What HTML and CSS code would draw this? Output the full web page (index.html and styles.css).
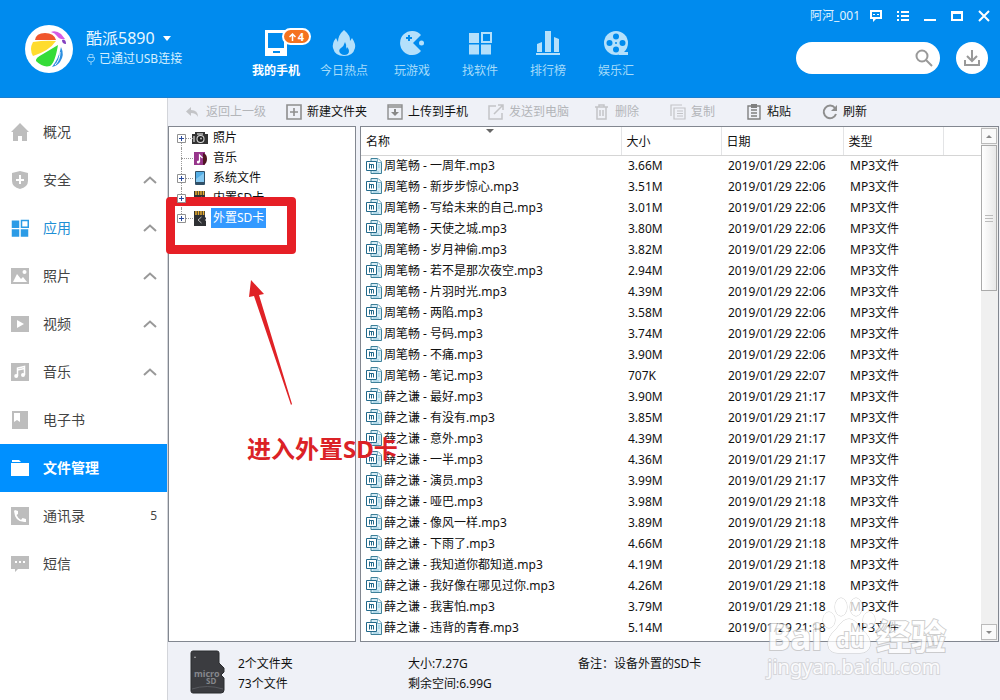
FILE: index.html
```html
<!DOCTYPE html>
<html lang="zh-CN">
<head>
    <meta charset="UTF-8">
    <meta name="viewport" content="width=device-width, initial-scale=1.0">
    <title>手机助手 - 文件管理</title>
    <link rel="stylesheet" href="styles.css">
</head>
<body>
    <!-- Shared icons -->
    <svg class="sprite" aria-hidden="true">
        <symbol id="doc" viewBox="0 0 16 16">
            <path d="M5 .5h7l3.500 3.500v11.500H5z" fill="#d5ecf6" stroke="#3d8099"/>
            <path d="M11.500.5v4h4" fill="#fff" stroke="#7fb3c8"/>
            <path d="M.5 3.500h10v9H.5z" fill="#fff" stroke="#22698a"/>
            <path d="M3.500 10.500v-5M3.500 6.500h4v4M5.500 6.500v4" fill="none" stroke="#22698a"/>
            <path d="M12 7h2M12 9h2M7 14h6" stroke="#8fc6dc"/>
        </symbol>
        <symbol id="up" viewBox="0 0 14 8">
            <path d="M1 7l6-5.500L13 7" fill="none" stroke="#999" stroke-width="2"/>
        </symbol>
        <symbol id="apps" viewBox="0 0 24 24">
            <path d="M1 2h10v10H1zM1 13.500h10v10H1zM13 13.500h10v10H13z"/>
            <path fill-rule="evenodd" d="M13 1h11v11H13zm2 2v7h7V3z"/>
        </symbol>
        <symbol id="plus" viewBox="0 0 9 9">
            <path d="M.5.5h8v8h-8z" fill="#fff" stroke="#919191"/>
            <path d="M2 4.500h5M4.500 2v5" stroke="#2b4a9b"/>
        </symbol>
        <symbol id="sd" viewBox="0 0 16 16">
            <path d="M2 1h11v6l1 1v1l-1 1 1 1v5H2z" fill="#2e3033"/>
            <path d="M4 1v4M6.500 1v4M9 1v4M11.500 1v4" stroke="#e9ad2f" stroke-width="1.500"/>
            <path d="M9.500 7L6 10l3.500 3" fill="none" stroke="#bbb"/>
        </symbol>
    </svg>

    <header class="top">
        <svg class="avatar" viewBox="0 0 48 48">
            <circle cx="24" cy="24" r="24" fill="#fff"/>
            <path d="M10 15Q11 8 20 8q9 0 11 7z" fill="#f0562c"/>
            <path d="M8 17q12-2 23-1Q24 26 8 31q-4-7 0-14z" fill="#ffdc2e"/>
            <path d="M33 20Q30 38 25 41q-7 2-14-5-1-3 7-7z" fill="#35dc38"/>
            <path d="M36 22q4 8-1 15-3 4-8 5 7-9 9-20z" fill="#2d8fe0"/>
            <path d="M35 27q0 8-5 13" fill="none" stroke="#fff"/>
            <path d="M26 7q5-2 10 2l4 5q-5 1-8-3-2-3-6-4z" fill="#d65be5"/>
            <path d="M37 15q4-1 4 4-4 0-4-4z" fill="#8340c0"/>
        </svg>
        <div class="device">
            <button class="device-name">酷派5890
                <svg width="8" height="5" viewBox="0 0 8 5"><path d="M0 0h8L4 5z" fill="#fff"/></svg>
            </button>
            <p class="device-state">
                <svg width="8" height="12" viewBox="0 0 8 12"><path d="M2 4V1.500h4V4M.5 4.500h7V6Q7 9 4 9T.5 6zM4 9v3" fill="none" stroke="#8fd0fa"/></svg>
                已通过USB连接
            </p>
        </div>

        <nav class="main-nav">
            <a href="#phone" class="current">
                <svg viewBox="0 0 24 26"><path fill="#fff" fill-rule="evenodd" d="M1 0h22v26H1zm3 3v15h16V3zm5 18v2h7v-2z"/></svg>
                我的手机
                <span class="badge"><svg width="7" height="8" viewBox="0 0 7 8"><path d="M3.500 8V1M.5 4l3-3 3 3" fill="none" stroke="#fff" stroke-width="1.500"/></svg>4</span>
            </a>
            <a href="#hot">
                <svg viewBox="0 0 24 26"><path fill-rule="evenodd" d="M12 0q7 6 6 11l2-3q4 6 3 10-2 8-11 8T1 18q-1-5 3-10l2 4q0-7 6-12zm1 12q-1 4-4 6t-1 5q2 2 4 2 5 0 5-4 0-2-2-4l-1 2q1-4-1-7z"/></svg>
                今日热点
            </a>
            <a href="#games">
                <svg viewBox="0 0 24 26"><path fill-rule="evenodd" d="M21 5A12 12 0 1 0 21 21l-8-8zM8 5h2v2h2v2h-2v2H8V9H6V7h2z"/><circle cx="21.500" cy="13" r="2.500"/></svg>
                玩游戏
            </a>
            <a href="#soft">
                <svg viewBox="0 0 24 26"><use href="#apps" y="1" width="24" height="24"/></svg>
                找软件
            </a>
            <a href="#rank">
                <svg viewBox="0 0 24 26"><path d="M0 23h24v2H0zM1 14l5-2v10H1zM9 1h6v21H9zM18 7l5 2v13h-5z"/></svg>
                排行榜
            </a>
            <a href="#fun">
                <svg viewBox="0 0 24 26"><circle cx="12" cy="13" r="12"/><path d="M15 22h9v3h-9z"/><g fill="#008bee"><circle cx="12" cy="6.500" r="3"/><circle cx="12" cy="19.500" r="3"/><circle cx="5.500" cy="13" r="3"/><circle cx="18.500" cy="13" r="3"/><circle cx="12" cy="13" r="1"/></g></svg>
                娱乐汇
            </a>
        </nav>

        <div class="tools">
            <div class="window-bar">
                <span class="user">阿河_001</span>
                <button aria-label="反馈"><svg viewBox="0 0 12 12"><path fill="#fff" fill-rule="evenodd" d="M0 0h12v9H6l-3 3V9H0zm2 2v5h8V2z"/><path d="M3 4h2v1H3zM7 4h2v1H7z" fill="#fff"/></svg></button>
                <button aria-label="菜单"><svg viewBox="0 0 12 12"><path fill="#fff" d="M0 1h2v2H0zM4 1h8v2H4zM0 5h2v2H0zM4 5h8v2H4zM0 9h2v2H0zM4 9h8v2H4z"/></svg></button>
                <button aria-label="最小化"><svg viewBox="0 0 12 12"><path fill="#fff" d="M0 9h12v2H0z"/></svg></button>
                <button aria-label="最大化"><svg viewBox="0 0 12 12"><path fill="#fff" fill-rule="evenodd" d="M0 1h12v10H0zm2 3v5h8V4z"/></svg></button>
                <button aria-label="关闭"><svg viewBox="0 0 12 12"><path d="M1 1l10 10M11 1L1 11" stroke="#fff" stroke-width="2"/></svg></button>
            </div>
            <div class="search-row">
                <form class="search">
                    <input type="text" aria-label="搜索">
                    <button type="button" aria-label="开始搜索"><svg width="18" height="18" viewBox="0 0 18 18"><circle cx="7" cy="7" r="5.500" fill="none" stroke="#999" stroke-width="2"/><path d="M11 11l6 6" stroke="#999" stroke-width="2"/></svg></button>
                </form>
                <button class="download" aria-label="下载"><svg width="16" height="16" viewBox="0 0 16 16"><path d="M8 0v11M3 6l5 5 5-5M1 10v5h14v-5" fill="none" stroke="#999" stroke-width="2"/></svg></button>
            </div>
        </div>
    </header>

    <div class="body">
        <nav class="sidebar">
            <a href="#overview"><svg viewBox="0 0 18 18"><path d="M9 0l9 9h-2v9h-5v-5H7v5H2V9H0z"/></svg><span>概况</span></a>
            <a href="#safe"><svg viewBox="0 0 18 18"><path fill-rule="evenodd" d="M9 0l8 2v8q0 6-8 8-8-2-8-8V2zM8 4v4H5v2h3v3h2v-3h3V8h-3V4z"/></svg><span>安全</span><svg class="chevron"><use href="#up"/></svg></a>
            <a href="#apps-list" class="blue"><svg viewBox="0 0 24 24"><use href="#apps"/></svg><span>应用</span><svg class="chevron"><use href="#up"/></svg></a>
            <a href="#photos"><svg viewBox="0 0 18 18"><path fill-rule="evenodd" d="M0 1h18v16H0zM2 15h14l-4-5-2 2-4-5z"/><circle cx="13.500" cy="5" r="2" fill="#fff"/></svg><span>照片</span><svg class="chevron"><use href="#up"/></svg></a>
            <a href="#video"><svg viewBox="0 0 18 18"><path fill-rule="evenodd" d="M0 1h18v16H0zM6 5v8l7-4z"/></svg><span>视频</span><svg class="chevron"><use href="#up"/></svg></a>
            <a href="#music"><svg viewBox="0 0 18 18"><path d="M0 0h18v18H0z"/><path d="M6.500 13V5l7-1.500V12M6.500 7l7-1.500" fill="none" stroke="#fff" stroke-width="1.500"/><circle cx="5.200" cy="13" r="2" fill="#fff"/><circle cx="12" cy="12" r="2" fill="#fff"/></svg><span>音乐</span><svg class="chevron"><use href="#up"/></svg></a>
            <a href="#books"><svg viewBox="0 0 18 18"><path fill-rule="evenodd" d="M1 0h16v18H1zM3 2v9l3-2 3 2V2z"/></svg><span>电子书</span></a>
            <a href="#files" class="selected"><svg viewBox="0 0 18 18"><path d="M1 1h7l2 2H1zM0 4h18v13H0z"/></svg><span>文件管理</span></a>
            <a href="#contacts"><svg viewBox="0 0 18 18"><path d="M0 0h18v18H0z"/><path d="M4 3l3 1v3L5.500 8Q7 11.500 10 13l1.500-2 3.500 1v3Q4 16 3 4z" fill="#fff"/></svg><span>通讯录</span><em>5</em></a>
            <a href="#sms"><svg viewBox="0 0 18 18"><path d="M0 1h18v13H7l-3 3v-3H0z"/><path d="M4 6h2v2H4zM8 6h2v2H8zM12 6h2v2h-2z" fill="#fff"/></svg><span>短信</span></a>
        </nav>

        <main class="content">
            <div class="toolbar">
                <button disabled><svg viewBox="0 0 16 16"><path d="M6 3v3q7 0 7 7-2-4-7-4v3L1 7.500z" fill="#999"/></svg>返回上一级</button>
                <button><svg viewBox="0 0 16 16"><path d="M1 1h14v14H1zM4 8h8M8 4v8" fill="none" stroke="#8e8e8e" stroke-width="1.600"/></svg>新建文件夹</button>
                <button><svg viewBox="0 0 16 16"><path d="M1 1h14v14H1zM1 3h14" fill="none" stroke="#8e8e8e" stroke-width="1.400"/><path d="M7 5h2v3h3l-4 4-4-4h3z" fill="#888"/></svg>上传到手机</button>
                <button disabled><svg viewBox="0 0 16 16"><path d="M8 2H1v13h13V9M10 1h5v5M15 1L6 10" fill="none" stroke="#999" stroke-width="1.500"/></svg>发送到电脑</button>
                <button class="short first" disabled><svg viewBox="0 0 16 16"><path d="M1 3h13M5 3V1h5v2M3 3v12h9V3M6 6v6M9 6v6" fill="none" stroke="#999" stroke-width="1.500"/></svg>删除</button>
                <button class="short" disabled><svg viewBox="0 0 16 16"><path d="M12 1H1v11M4 4h11v11H4zM7 7h6M7 9.500h6M7 12h6" fill="none" stroke="#999" stroke-width="1.200"/></svg>复制</button>
                <button class="short"><svg viewBox="0 0 16 16"><path d="M2 2h12v13H2zM5 6h6M5 9h6M5 12h6" fill="none" stroke="#808080" stroke-width="1.400"/><path d="M5 0h6v4H5z" fill="#808080"/></svg>粘贴</button>
                <button class="short"><svg viewBox="0 0 16 16"><path d="M13 4A6.300 6.300 0 1 0 14 10" fill="none" stroke="#8e8e8e" stroke-width="2"/><path d="M15 1v6H9z" fill="#8e8e8e"/></svg>刷新</button>
            </div>

            <div class="panels">
                <ul class="tree">
                    <li><button class="expand" aria-label="展开"><svg><use href="#plus"/></svg></button>
                        <svg viewBox="0 0 16 16"><path d="M0 4h3V2h10v2h3v10H0z" fill="#333"/><path d="M5 3h6v2H5zM1 6h2v6H1z" fill="#999"/><circle cx="8.500" cy="9" r="4" fill="#ddd"/><circle cx="8.500" cy="9" r="3" fill="#222"/><circle cx="9" cy="8.500" r="1" fill="#bbb"/></svg>
                        <a href="#t1">照片</a></li>
                    <li><span class="expand"></span>
                        <svg viewBox="0 0 16 16"><path d="M2 2h11v13H2z" fill="#97358b"/><path d="M11 3q4 1 4 6t-4 6z" fill="#4d1620"/><path d="M7.500 12V5l3 3" fill="none" stroke="#fff" stroke-width="1.200"/><circle cx="6.300" cy="12" r="1.500" fill="#fff"/></svg>
                        <a href="#t2">音乐</a></li>
                    <li><button class="expand" aria-label="展开"><svg><use href="#plus"/></svg></button>
                        <svg viewBox="0 0 16 16"><rect x="3" y="1" width="10" height="14" rx="1" fill="#315067"/><path d="M4 2h8v10H4z" fill="#54aee5"/><path d="M4 9l8-6v9H4z" fill="#85c9f2"/></svg>
                        <a href="#t3">系统文件</a></li>
                    <li><button class="expand" aria-label="展开"><svg><use href="#plus"/></svg></button>
                        <svg viewBox="0 0 16 16"><use href="#sd"/></svg>
                        <a href="#t4">内置SD卡</a></li>
                    <li><button class="expand" aria-label="展开"><svg><use href="#plus"/></svg></button>
                        <svg viewBox="0 0 16 16"><use href="#sd"/></svg>
                        <a href="#t5" class="picked">外置SD卡</a></li>
                </ul>

                <div class="list">
                    <table class="files">
                        <colgroup><col class="c-name"><col class="c-size"><col class="c-date"><col class="c-type"><col></colgroup>
                        <thead>
                            <tr><th>名称<i class="sort"></i></th><th>大小</th><th>日期</th><th>类型</th><th></th></tr>
                        </thead>
                        <tbody>
                            <tr><td><svg><use href="#doc"/></svg>周笔畅 - 一周年.mp3</td><td>3.66M</td><td>2019/01/29 22:06</td><td>MP3文件</td><td></td></tr>
                            <tr><td><svg><use href="#doc"/></svg>周笔畅 - 新步步惊心.mp3</td><td>3.51M</td><td>2019/01/29 22:06</td><td>MP3文件</td><td></td></tr>
                            <tr><td><svg><use href="#doc"/></svg>周笔畅 - 写给未来的自己.mp3</td><td>3.01M</td><td>2019/01/29 22:06</td><td>MP3文件</td><td></td></tr>
                            <tr><td><svg><use href="#doc"/></svg>周笔畅 - 天使之城.mp3</td><td>3.80M</td><td>2019/01/29 22:06</td><td>MP3文件</td><td></td></tr>
                            <tr><td><svg><use href="#doc"/></svg>周笔畅 - 岁月神偷.mp3</td><td>3.82M</td><td>2019/01/29 22:06</td><td>MP3文件</td><td></td></tr>
                            <tr><td><svg><use href="#doc"/></svg>周笔畅 - 若不是那次夜空.mp3</td><td>2.94M</td><td>2019/01/29 22:06</td><td>MP3文件</td><td></td></tr>
                            <tr><td><svg><use href="#doc"/></svg>周笔畅 - 片羽时光.mp3</td><td>4.39M</td><td>2019/01/29 22:06</td><td>MP3文件</td><td></td></tr>
                            <tr><td><svg><use href="#doc"/></svg>周笔畅 - 两陷.mp3</td><td>3.58M</td><td>2019/01/29 22:06</td><td>MP3文件</td><td></td></tr>
                            <tr><td><svg><use href="#doc"/></svg>周笔畅 - 号码.mp3</td><td>3.74M</td><td>2019/01/29 22:06</td><td>MP3文件</td><td></td></tr>
                            <tr><td><svg><use href="#doc"/></svg>周笔畅 - 不痛.mp3</td><td>3.90M</td><td>2019/01/29 22:06</td><td>MP3文件</td><td></td></tr>
                            <tr><td><svg><use href="#doc"/></svg>周笔畅 - 笔记.mp3</td><td>707K</td><td>2019/01/29 22:07</td><td>MP3文件</td><td></td></tr>
                            <tr><td><svg><use href="#doc"/></svg>薛之谦 - 最好.mp3</td><td>3.90M</td><td>2019/01/29 21:17</td><td>MP3文件</td><td></td></tr>
                            <tr><td><svg><use href="#doc"/></svg>薛之谦 - 有没有.mp3</td><td>3.85M</td><td>2019/01/29 21:17</td><td>MP3文件</td><td></td></tr>
                            <tr><td><svg><use href="#doc"/></svg>薛之谦 - 意外.mp3</td><td>4.39M</td><td>2019/01/29 21:17</td><td>MP3文件</td><td></td></tr>
                            <tr><td><svg><use href="#doc"/></svg>薛之谦 - 一半.mp3</td><td>4.36M</td><td>2019/01/29 21:17</td><td>MP3文件</td><td></td></tr>
                            <tr><td><svg><use href="#doc"/></svg>薛之谦 - 演员.mp3</td><td>3.99M</td><td>2019/01/29 21:17</td><td>MP3文件</td><td></td></tr>
                            <tr><td><svg><use href="#doc"/></svg>薛之谦 - 哑巴.mp3</td><td>3.98M</td><td>2019/01/29 21:18</td><td>MP3文件</td><td></td></tr>
                            <tr><td><svg><use href="#doc"/></svg>薛之谦 - 像风一样.mp3</td><td>3.89M</td><td>2019/01/29 21:18</td><td>MP3文件</td><td></td></tr>
                            <tr><td><svg><use href="#doc"/></svg>薛之谦 - 下雨了.mp3</td><td>4.66M</td><td>2019/01/29 21:18</td><td>MP3文件</td><td></td></tr>
                            <tr><td><svg><use href="#doc"/></svg>薛之谦 - 我知道你都知道.mp3</td><td>4.19M</td><td>2019/01/29 21:18</td><td>MP3文件</td><td></td></tr>
                            <tr><td><svg><use href="#doc"/></svg>薛之谦 - 我好像在哪见过你.mp3</td><td>4.26M</td><td>2019/01/29 21:18</td><td>MP3文件</td><td></td></tr>
                            <tr><td><svg><use href="#doc"/></svg>薛之谦 - 我害怕.mp3</td><td>3.79M</td><td>2019/01/29 21:18</td><td>MP3文件</td><td></td></tr>
                            <tr><td><svg><use href="#doc"/></svg>薛之谦 - 违背的青春.mp3</td><td>5.14M</td><td>2019/01/29 21:18</td><td>MP3文件</td><td></td></tr>
                        </tbody>
                    </table>
                    <div class="scrollbar">
                        <button aria-label="向上"><svg width="6" height="3" viewBox="0 0 6 3"><path d="M0 3l3-3 3 3z" fill="#888"/></svg></button>
                        <div class="thumb"><i></i><i></i><i></i></div>
                        <button class="down" aria-label="向下"><svg width="6" height="3" viewBox="0 0 6 3"><path d="M0 0l3 3 3-3z" fill="#888"/></svg></button>
                    </div>
                </div>
            </div>

            <footer class="status">
                <svg class="card" viewBox="0 0 36 44">
                    <path d="M3 1h24q2 0 2 2v10l5 5v4l-3 3 3 3v12q0 3-3 3H3q-2 0-2-2V3q0-2 2-2z" fill="#3b3c40" stroke="#2b2c2f"/>
                    <path d="M4 8l1-2 1 2z" fill="#aaa"/>
                    <path d="M2 39q15-5 31 0" fill="none" stroke="#585a5f"/>
                    <text x="4" y="27" class="card-text">micro</text>
                    <text x="16" y="34" class="card-text small">SD</text>
                </svg>
                <p>2个文件夹<br>73个文件</p>
                <p>大小:7.27G<br>剩余空间:6.99G</p>
                <p>备注：设备外置的SD卡</p>
            </footer>
        </main>
    </div>

    <!-- Annotations on top of the window -->
    <div class="mark-box"></div>
    <svg class="mark-arrow" viewBox="0 0 44 128"><path d="M3 1l13 14-5 1 33 109-1 1L6 17l-5 1z" fill="#e02226"/></svg>
    <div class="mark-text">进入外置SD卡</div>

    <div class="watermark">
        <div class="brand"><span>Bai</span><svg viewBox="0 0 54 58"><g class="paw"><ellipse cx="7" cy="23" rx="6" ry="8"/><ellipse cx="19" cy="10" rx="6" ry="9"/><ellipse cx="34" cy="10" rx="6" ry="9"/><ellipse cx="47" cy="23" rx="6" ry="8"/><path d="M27 22q6 0 11 9 12 9 10 18-2 7-10 7H16q-9 0-10-8-1-8 9-17 6-9 12-9z"/></g><text x="14" y="51" class="paw-text">du</text></svg><span>经验</span></div>
        <div class="site">jingyan.baidu.com</div>
    </div>
</body>
</html>
```
FILE: styles.css
```css
* {
    box-sizing: border-box;
}

body {
    position: relative;
    display: flex;
    flex-direction: column;
    min-height: 100vh;
    margin: 0;
    font-family: "Noto Sans", "Noto Sans CJK SC", sans-serif;
    font-size: 12px;
    line-height: 20px;
    color: #111;
    background: #eff1f7;
}

button {
    padding: 0;
    border: none;
    background: none;
    color: inherit;
    font: inherit;
    cursor: pointer;
}

a {
    color: inherit;
    text-decoration: none;
}

p, ul {
    margin: 0;
    padding: 0;
    list-style: none;
}

.sprite {
    display: none;
}

/* Top bar */
.top {
    display: flex;
    height: 98px;
    padding: 0 10px 0 25px;
    background: #008bee;
    border-bottom: 1px solid #1a7fd0;
    color: #fff;
}

.avatar {
    width: 48px;
    height: 48px;
    margin-top: 25px;
}

.device {
    width: 156px;
    margin-left: 13px;
    padding-top: 28px;
}

.device-name {
    display: flex;
    align-items: center;
    gap: 8px;
    color: #e8f7ff;
    font-size: 16px;
    line-height: 21px;
}

.device-state {
    display: flex;
    align-items: center;
    gap: 4px;
    padding-left: 1px;
    color: #d5f0ff;
}

.main-nav {
    display: flex;
}

.main-nav a {
    position: relative;
    display: flex;
    flex-direction: column;
    align-items: center;
    gap: 5px;
    width: 68px;
    padding-top: 30px;
    color: #a5dbfa;
}

.main-nav a > svg {
    width: 24px;
    height: 26px;
    fill: #b4e0fb;
}

.main-nav .current {
    color: #fff;
    font-weight: bold;
}

.badge {
    position: absolute;
    top: 28px;
    left: 40px;
    display: flex;
    align-items: center;
    justify-content: center;
    gap: 2px;
    width: 29px;
    height: 17px;
    border: 2px solid #fff;
    border-radius: 9px;
    background: #f5731f;
    font-size: 11px;
}

.tools {
    display: flex;
    flex-direction: column;
    align-items: flex-end;
    gap: 16px;
    margin-left: auto;
    padding-top: 6px;
}

.window-bar {
    display: flex;
    align-items: center;
    gap: 15px;
}

.window-bar svg {
    display: block;
    width: 12px;
    height: 12px;
}

.user {
    margin-right: -5px;
    color: #e0f4ff;
}

.search-row {
    display: flex;
    gap: 16px;
    padding-right: 2px;
}

.search {
    display: flex;
    align-items: center;
    width: 144px;
    height: 32px;
    padding: 0 7px 0 14px;
    border-radius: 16px;
    background: #fff;
}

.search input {
    flex: 1;
    min-width: 0;
    border: none;
    outline: none;
    background: none;
    font: inherit;
}

.search svg, .download svg {
    display: block;
}

.download {
    display: flex;
    align-items: center;
    justify-content: center;
    width: 32px;
    height: 32px;
    border-radius: 50%;
    background: #fff;
}

/* Sidebar */
.body {
    display: flex;
    flex: 1;
}

.sidebar {
    width: 168px;
    padding-top: 10px;
    background: #fff;
    border-right: 1px solid #d3d5da;
}

.sidebar a {
    display: flex;
    align-items: center;
    gap: 14px;
    height: 48px;
    padding: 0 10px 0 11px;
    color: #444;
    font-size: 14px;
}

.sidebar svg {
    width: 18px;
    height: 18px;
    fill: #bdbdbd;
}

.sidebar .chevron {
    width: 14px;
    height: 8px;
    margin-left: auto;
}

.sidebar em {
    margin-left: auto;
    font-size: 12px;
    font-style: normal;
}

.sidebar .blue {
    color: #1e8fd5;
}

.sidebar .blue svg {
    fill: #2b9be6;
}

.sidebar .selected {
    background: #0090ff;
    color: #fff;
    font-weight: bold;
}

.sidebar .selected svg {
    fill: #fff;
}

/* Toolbar */
.content {
    display: flex;
    flex: 1;
    flex-direction: column;
    min-width: 0;
}

.toolbar {
    display: flex;
    height: 28px;
    padding-left: 17px;
}

.toolbar button {
    display: flex;
    align-items: center;
    gap: 5px;
    margin-right: 20px;
    white-space: nowrap;
}

.toolbar svg {
    width: 16px;
    height: 16px;
}

.toolbar .short {
    margin-right: 31px;
}

.toolbar .first {
    margin-left: 5px;
}

.toolbar button:disabled {
    color: #b3b5b9;
    cursor: default;
}

.toolbar button:disabled svg {
    opacity: 0.5;
}

/* Folder tree */
.panels {
    display: flex;
    flex: 1;
    gap: 4px;
    padding-right: 1px;
}

.tree {
    width: 188px;
    padding-top: 1px;
    background: #fff;
    border: 1px solid #828790;
}

.tree li {
    position: relative;
    display: flex;
    align-items: center;
    height: 20px;
    padding-left: 8px;
}

/* dotted guide lines */
.tree li::before {
    content: "";
    position: absolute;
    top: 0;
    bottom: 0;
    left: 12px;
    border-left: 1px dotted #999;
}

.tree li:first-child::before {
    top: 10px;
}

.tree li:last-child::before {
    bottom: 10px;
}

.tree li::after {
    content: "";
    position: absolute;
    top: 10px;
    left: 12px;
    width: 12px;
    border-top: 1px dotted #999;
}

.tree .expand {
    z-index: 1;
    width: 9px;
    height: 9px;
    margin-right: 6px;
}

.tree .expand svg {
    display: block;
    width: 9px;
    height: 9px;
}

.tree li > svg {
    width: 16px;
    height: 16px;
    margin-right: 3px;
}

.tree a {
    padding: 0 2px;
}

.tree .picked {
    background: #3399ff;
    color: #fff;
}

/* File list */
.list {
    display: flex;
    flex: 1;
    min-width: 0;
    background: #fff;
    border: 1px solid #828790;
}

.files {
    flex: 1;
    align-self: flex-start;
    table-layout: fixed;
    border-collapse: collapse;
    width: 100%;
}

.c-name {
    width: 260px;
}

.c-size, .c-type {
    width: 100px;
}

.c-date {
    width: 122px;
}

.files th {
    position: relative;
    height: 28px;
    padding: 2px 5px 0;
    border-bottom: 1px solid #d5d5d5;
    border-right: 1px solid #e3e4e6;
    font-weight: normal;
    text-align: left;
}

.files th:last-child {
    border-right: none;
}

.sort {
    position: absolute;
    top: 2px;
    left: 48%;
    border: 4px solid transparent;
    border-top-color: #666;
    border-bottom: none;
}

.files td {
    height: 21px;
    padding: 0 7px;
    white-space: nowrap;
}

.files td:first-child {
    padding-left: 5px;
}

.files td svg {
    width: 16px;
    height: 16px;
    margin: -2px 2px 0 0;
    vertical-align: middle;
}

.scrollbar {
    display: flex;
    flex-direction: column;
    gap: 1px;
    width: 17px;
    padding: 1px 1px 1px 0;
    background: #f0f0f0;
}

.scrollbar button {
    display: flex;
    align-items: center;
    justify-content: center;
    height: 16px;
    border: 1px solid #bbb;
    background: #fafafa;
}

.scrollbar .down {
    margin-top: auto;
}

.thumb {
    display: flex;
    flex-direction: column;
    align-items: center;
    justify-content: center;
    gap: 2px;
    height: 146px;
    border: 1px solid #aaa;
    background: linear-gradient(to right, #fff, #e8e8e8);
}

.thumb i {
    width: 8px;
    height: 1px;
    background: #bbb;
}

/* Status bar */
.status {
    display: flex;
    height: 58px;
    padding: 12px 0 0 22px;
}

.status p {
    width: 170px;
}

.card {
    width: 36px;
    height: 44px;
    margin: -4px 12px 0 0;
}

.card-text {
    fill: #85878c;
    font-size: 9px;
    font-weight: bold;
}

.card-text.small {
    font-size: 8px;
}

/* Annotations */
.mark-box {
    position: absolute;
    top: 197px;
    left: 166px;
    width: 130px;
    height: 57px;
    border: 9px solid #e61f26;
    border-radius: 4px;
}

.mark-arrow {
    position: absolute;
    top: 279px;
    left: 248px;
    width: 44px;
    height: 128px;
}

.mark-text {
    position: absolute;
    top: 434px;
    left: 247px;
    color: #db2226;
    font-size: 24px;
    font-weight: bold;
    line-height: 30px;
    white-space: nowrap;
}

.watermark {
    position: absolute;
    right: 54px;
    bottom: 21px;
    color: #fff;
    opacity: 0.75;
    pointer-events: none;
}

.brand {
    display: flex;
    align-items: flex-end;
    font-size: 35px;
    font-weight: bold;
    line-height: 36px;
    -webkit-text-stroke: 2px #bfbfbf;
    paint-order: stroke fill;
}

.brand svg {
    width: 54px;
    height: 58px;
}

.paw {
    fill: #fff;
    stroke: #bfbfbf;
}

.paw-text {
    fill: #fff;
    stroke: #bfbfbf;
    stroke-width: 2px;
    font-size: 22px;
}

.site {
    font-size: 20px;
    line-height: 24px;
    -webkit-text-stroke: 2px #cdcdd0;
    paint-order: stroke fill;
}
```
